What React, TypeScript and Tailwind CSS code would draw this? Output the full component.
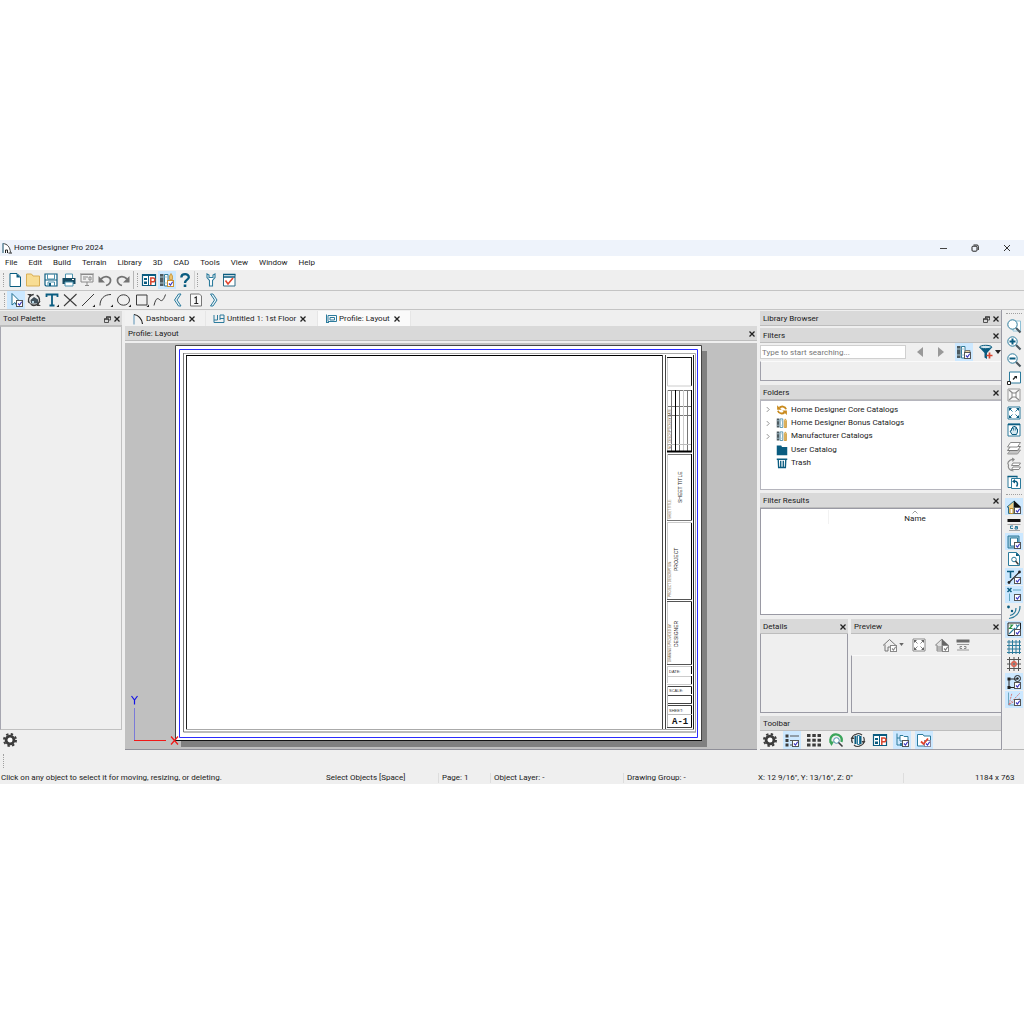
import type { ReactNode } from "react";

const TEAL = "#0a5c80";
const DARK = "#3c3c3c";
const GREY = "#8a8a8a";

// ——— Icon helpers ———
const Icon = ({ children }: { children: ReactNode }) => (
  <svg viewBox="0 0 16 16" className="h-4 w-4 shrink-0" fill="none" aria-hidden="true">
    {children}
  </svg>
);

// small tick box that marks a toggle which is switched on
const Tick = ({ color = "#3a35c0", stroke = "#555" }: { color?: string; stroke?: string }) => (
  <>
    <rect x="8.5" y="8.5" width="6" height="6" fill="#fff" stroke={stroke} strokeWidth="1" />
    <path d="M10 11.5l1.5 1.6 2.2-3.4" stroke={color} strokeWidth="1.1" />
  </>
);

const Corner = () => <path d="M15 12.5V15h-2.5z" fill="#222" />;

const NewIcon = () => (
  <Icon>
    <path d="M3 1.5h7l3.5 3.5v9.5H3z" fill="#fff" stroke={TEAL} />
    <path d="M9.5 1.5l4 4h-4z" fill={TEAL} />
  </Icon>
);
const OpenIcon = () => (
  <Icon>
    <path d="M1.5 2h5L8 4h6.5v10h-13z" fill="#f8dd94" stroke="#d9ae55" />
  </Icon>
);
const SaveIcon = () => (
  <Icon>
    <path d="M2 2h12v12H3l-1-1z" fill="#fff" stroke={TEAL} strokeWidth="1.2" />
    <path d="M4.5 2v5h7V2M5 14v-4h6.5v4" stroke="#4b92ae" />
    <path d="M2 8h12" stroke={TEAL} />
    <path d="M6 11h2v3H6z" fill={TEAL} />
  </Icon>
);
const PrintIcon = () => (
  <Icon>
    <path d="M4.5 6V2h7v4" fill="#fff" stroke="#4b92ae" />
    <path d="M1.5 6h13v6h-13z" fill="#174b62" />
    <path d="M4 10h8v4H4z" fill="#fff" stroke="#4b92ae" />
    <path d="M11 7.5h2" stroke="#fff" />
  </Icon>
);
const SendIcon = () => (
  <Icon>
    <path d="M2 2.5h12V10H2z" stroke={GREY} />
    <path d="M1 2h14M4 5h5M4 7h3M10 5h2v3h-2zM6 13.5h4M8 10v4" stroke={GREY} />
  </Icon>
);
const UndoIcon = () => (
  <Icon>
    <path d="M4 7c4-4 10-2.500 9.500 2-.3 2.500-2.500 4-4.500 4.500" stroke="#737373" strokeWidth="1.800" />
    <path d="M1.500 4v6.500H8z" fill="#737373" />
  </Icon>
);
const RedoIcon = () => (
  <Icon>
    <path d="M12 7C8 3 2 4.500 2.500 9c.3 2.500 2.500 4 4.500 4.500" stroke="#737373" strokeWidth="1.800" />
    <path d="M14.500 4v6.500H8z" fill="#737373" />
  </Icon>
);
const PlanIcon = () => (
  <Icon>
    <path d="M1.5 2.5h13v11h-13z" fill="#fff" stroke={TEAL} strokeWidth="1.2" />
    <path d="M1 3h14" stroke={TEAL} strokeWidth="2" />
    <path d="M3 6h3v2H3zM3 9.5h3V12H3z" fill={TEAL} />
    <path d="M7.5 4v9.5" stroke={TEAL} />
    <path d="M9.8 13V6H12a1.7 1.7 0 010 3.8h-2" stroke="#d8452e" strokeWidth="1.5" />
  </Icon>
);
const Books = () => (
  <>
    <path d="M1 2h3.5v12H1z" fill="#4d5a60" />
    <path d="M5.5 2.500H9v11.500H5.500z" fill="#fff" stroke="#317c9b" />
    <path d="M1 5h3.500M1 11h3.500M5.500 5H9M5.500 11H9" stroke="#a9c6d2" />
  </>
);
const LibraryIcon = () => (
  <Icon>
    <Books />
    <path d="M10.5 7.500V4L12 1.500 13.500 4v3.500z" fill="#ecc26b" stroke="#c48a22" strokeWidth=".7" />
    <Tick stroke="#c89232" />
  </Icon>
);
const CatalogIcon = () => (
  <Icon>
    <Books />
    <path d="M11 5l1.500-2.500L14 5v9h-3z" fill="#f3cf84" stroke="#c48a22" strokeWidth=".9" />
    <path d="M12.500 5v9" stroke="#c48a22" strokeWidth=".7" />
  </Icon>
);
const HelpIcon = () => (
  <Icon>
    <path d="M4.300 5.500C4.500 1 12 1.300 11.800 5.300 11.600 7.800 8 7.500 8 11" stroke={TEAL} strokeWidth="2.300" />
    <path d="M6.700 12.500h2.600V15H6.700z" fill={TEAL} />
  </Icon>
);
const WrenchIcon = () => (
  <Icon>
    <path
      d="M4 2v3.500l2.500 3V14h3V8.500l2.500-3V2l-2 1v2.500H6V3z"
      fill="#fff"
      stroke="#2c7b9c"
      strokeWidth="1.100"
    />
  </Icon>
);
const ChecklistIcon = () => (
  <Icon>
    <path d="M2.500 2.500H14V14H2.500z" fill="#fff" stroke="#2f6c87" />
    <path d="M2 2.500h12.500M2 5h12" stroke={TEAL} strokeWidth="1.300" />
    <path d="M4.500 8.500L7 12l5-6" stroke="#e0452f" strokeWidth="1.600" />
  </Icon>
);
const SelectIcon = () => (
  <Icon>
    <path d="M4 1.500V13l3-2.500 2 4 1.500-.8-2-3.700h4z" fill="#fff" stroke="#1f6f91" />
    <Tick />
  </Icon>
);
const OrbitIcon = () => (
  <Icon>
    <circle cx="8" cy="8" r="5.500" stroke={DARK} strokeWidth="1.300" strokeDasharray="11 3" />
    <path d="M4.500 8L8 5l4 2.500v4H5z" fill="#41505a" />
    <path d="M6 9h2v2H6z" fill="#b8d6e4" />
    <path d="M1 2h4v3zM15 14h-4v-3z" fill={DARK} />
    <path d="M2 9c3 6 11 5 12 0" stroke={DARK} />
  </Icon>
);
const TextIcon = () => (
  <Icon>
    <path d="M2.500 5V2.500h11V5M8 2.500v11M5.500 13.500h5" stroke={TEAL} strokeWidth="1.800" />
    <Corner />
  </Icon>
);
const CrossIcon = () => (
  <Icon>
    <path d="M2 2.500L14.500 14M14.500 2L2 14" stroke={DARK} strokeWidth="1.100" />
  </Icon>
);
const LineIcon = () => (
  <Icon>
    <path d="M2 14L14 2" stroke={DARK} />
    <Corner />
  </Icon>
);
const ArcIcon = () => (
  <Icon>
    <path d="M2 13.500C2 7 6 2.500 13 2.500" stroke={DARK} />
    <Corner />
  </Icon>
);
const EllipseIcon = () => (
  <Icon>
    <ellipse cx="7.500" cy="8" rx="6" ry="5.200" stroke={DARK} />
    <Corner />
  </Icon>
);
const RectIcon = () => (
  <Icon>
    <path d="M2.500 3H13v10H2.500z" stroke={DARK} />
    <Corner />
  </Icon>
);
const SplineIcon = () => (
  <Icon>
    <path d="M2 13.500C4 5 6 6 8 8s4-1 5.500-5.500" stroke={DARK} />
  </Icon>
);
const BackIcon = () => (
  <Icon>
    <path d="M11 2H8.500l-4 6 4 6H11L7 8z" fill="#e4f1f7" stroke="#2c7b9c" />
  </Icon>
);
const NextIcon = () => (
  <Icon>
    <path d="M4.500 2H7l4 6-4 6H4.500l4-6z" fill="#e4f1f7" stroke="#2c7b9c" />
  </Icon>
);
const PageIcon = () => (
  <Icon>
    <path d="M2.500 2h9l2 2v10h-11z" fill="#f8f8f8" stroke="#777" />
    <path d="M6.500 6l1.800-1v6.500M6.300 11.500h4" stroke="#222" strokeWidth="1.100" />
  </Icon>
);
const GearIcon = () => (
  <Icon>
    <circle cx="8" cy="8" r="3.900" stroke={DARK} strokeWidth="2.800" fill="#fff" />
    <circle cx="8" cy="8" r="6" stroke={DARK} strokeWidth="2" strokeDasharray="2.360 2.360" />
  </Icon>
);

// ——— Zoom and view icons ———
const Lens = ({ children }: { children?: ReactNode }) => (
  <>
    <path d="M10 10l4.500 4.500" stroke="#4b5961" strokeWidth="2.200" />
    <circle cx="6.500" cy="6.500" r="4.700" fill="#fff" stroke="#2c7b9c" />
    {children}
  </>
);
const ZoomIcon = () => (
  <Icon>
    <path d="M7 3h7.500v10H7z" fill="#fff" stroke="#8fc1d6" />
    <Lens />
  </Icon>
);
const ZoomInIcon = () => (
  <Icon>
    <Lens>
      <path d="M3.500 6.500h6M6.500 3.500v6" stroke={TEAL} strokeWidth="2" />
    </Lens>
  </Icon>
);
const ZoomOutIcon = () => (
  <Icon>
    <Lens>
      <path d="M3.500 6.500h6" stroke={TEAL} strokeWidth="2" />
    </Lens>
  </Icon>
);
const ResizeIcon = () => (
  <Icon>
    <path d="M3.500 2h11v11h-11z" fill="#fff" stroke="#2c7b9c" />
    <path d="M1.500 11.500h3v3h-3z" fill="#fff" stroke="#222" />
    <path d="M7 9.500L9.500 7" stroke="#222" strokeWidth="1.300" />
    <path d="M8 6h3v3z" fill="#222" />
  </Icon>
);
const Fit = ({ c, fill }: { c: string; fill: string }) => (
  <Icon>
    <path d="M2 2h12v12H2z" fill="#fff" stroke={c} />
    <path d="M3 3l3.500 3.500M13 3L9.500 6.500M3 13l3.500-3.500M13 13L9.500 9.500" stroke={c} />
    <path d="M3 3h3L3 6zM13 3v3l-3-3zM3 13v-3l3 3zM13 13h-3l3-3z" fill={fill} />
  </Icon>
);
const FitGreyIcon = () => (
  <Icon>
    <path d="M2 2h12v12H2z" fill="#f8f8f8" stroke="#999" />
    <path d="M3 3l3.500 3M13 3L9.500 6M3 13l3.500-3M13 13l-3.500-3" stroke={GREY} strokeWidth="1.200" />
    <path d="M6 6h4v4H6z" fill="#fff" stroke={GREY} />
  </Icon>
);
const HandIcon = () => (
  <Icon>
    <path d="M2 2h12v12H2z" fill="#fff" stroke="#2c7b9c" />
    <path d="M2 2.500h12" stroke={TEAL} strokeWidth="1.600" />
    <path d="M6 12.500L4 9l1.500-.5v-2h1V5h1.300v-.5h1.400v.8h1.300V7h1v3l-1 2.500z" fill="#d5e8f0" stroke={TEAL} />
    <path d="M7.500 6v2.500M9.300 6v2.500" stroke={TEAL} strokeWidth=".7" />
  </Icon>
);
const LayersIcon = () => (
  <Icon>
    <path d="M1.500 14l3-4h10l-3 4z" fill="#c4c4c4" stroke="#9a9a9a" />
    <path d="M1.500 10.500l3-4h10l-3 4z" fill="#fff" stroke="#777" />
    <path d="M1.500 7l3-4.500h10l-3 4.500z" fill="#fff" stroke={GREY} />
  </Icon>
);
const SwapLinesIcon = () => (
  <Icon>
    <path d="M7 2.200C2 3.500 1 6 2.500 8c-1 3 1 5.500 5 6" stroke={GREY} strokeWidth="1.200" />
    <path d="M6 .5l3 1.700L6.500 5z" fill={GREY} />
    <path d="M7 6h7.500L13 8.500H5.500zM7 10h7.500L13 12.500H5.500z" fill="#fff" stroke={GREY} />
  </Icon>
);
const RevertIcon = () => (
  <Icon>
    <path d="M2 2.500h9v11H2z" fill="#fff" stroke="#2c7b9c" />
    <path d="M5.500 4.500h9v10h-9z" fill="#fff" stroke="#2c7b9c" />
    <path d="M1.500 2.500h10" stroke={TEAL} strokeWidth="1.500" />
    <path d="M8 7.500c4-1 4 3 2.500 5" stroke={TEAL} strokeWidth="1.500" />
    <path d="M6 7.500L9 5v4.500z" fill={TEAL} />
  </Icon>
);
const HouseLayersIcon = () => (
  <Icon>
    <path d="M1 8l7-6v12.500H2.500V8z" fill="#f1cf87" stroke="#2c6d8b" />
    <path d="M8 1.500L15 8H8z" fill="#111" />
    <path d="M8 8h5v5H8z" fill="#e6a93c" />
    <path d="M4 9.500h3v5H4z" fill="#fff" stroke="#c1912f" />
    <Tick />
  </Icon>
);
const LineWeightIcon = () => (
  <Icon>
    <path d="M1.500 3h13v3h-13z" fill="#111" />
    <path d="M1.500 8.500h13M3 14.500h11" stroke="#888" strokeWidth=".7" />
    <path d="M7 10H4.500v2.500H7M9 10.500h2.500V13H9v-1.300h2.500" stroke="#2c7b9c" />
  </Icon>
);
const SheetTickIcon = () => (
  <Icon>
    <path d="M2 2h11v12H2z" fill="#9cc5d8" stroke="#2c7b9c" />
    <path d="M4.500 4h7v8h-7z" fill="#fff" stroke="#2c7b9c" />
    <Tick />
  </Icon>
);
const PreviewPageIcon = () => (
  <Icon>
    <path d="M2.500 1.500h8l3 3v10h-11z" fill="#fff" stroke="#2c7b9c" />
    <path d="M10 1.500V5h3.500z" fill={TEAL} />
    <circle cx="8" cy="8.500" r="2.300" stroke="#2c7b9c" />
    <path d="M9.500 10l3 3.500" stroke={DARK} strokeWidth="1.500" />
  </Icon>
);
const TextLineIcon = () => (
  <Icon>
    <path d="M1 2.500h7M4.500 2.500V9" stroke={TEAL} strokeWidth="1.500" />
    <path d="M3 13.500L13.500 3" stroke="#222" strokeWidth="1.200" />
    <circle cx="3" cy="13.500" r="1.400" fill="#222" />
    <circle cx="13.500" cy="3" r="1.400" fill="#222" />
    <Tick />
  </Icon>
);
const PointSnapIcon = () => (
  <Icon>
    <path d="M1.500 2l4 4M5.500 2l-4 4" stroke={TEAL} strokeWidth="1.500" />
    <path d="M7 4h8M3.500 7.500V15" stroke="#60a4c0" />
    <Tick />
  </Icon>
);
const ArcsIcon = () => (
  <Icon>
    <path d="M14 2c0 7-4.500 11.500-11 12.500M10 4c0 4-2 6.500-6 7.500" stroke="#2c7b9c" strokeWidth="1.200" />
    <circle cx="2.500" cy="3" r="1.400" fill={TEAL} />
    <circle cx="6" cy="7" r="1.200" fill={TEAL} />
  </Icon>
);
const AxesIcon = () => (
  <Icon>
    <path d="M2 2h12.500v12.500H2z" fill="#fff" stroke="#222" />
    <path d="M3.500 4h3l-3 3.500h3" stroke="#2a9143" strokeWidth="1.200" />
    <path d="M10 3.500l1.500 2 2-2M11.500 5.500L10 8M3 13l6-6" stroke="#2c7b9c" strokeWidth="1.200" />
    <Tick />
  </Icon>
);
const GridIcon = () => (
  <Icon>
    <path d="M3 1v14M6.500 1v14M10 1v14M13.500 1v14M1 3h14M1 6.500h14M1 10h14M1 13.500h14" stroke="#2c7b9c" />
  </Icon>
);
const GridSnapIcon = () => (
  <Icon>
    <path d="M3.500 1v14M8 1v14M12.500 1v14M1 3.500h14M1 8h14M1 12.500h14" stroke="#555" />
    <circle cx="8" cy="8" r="2.200" stroke="#e0604c" strokeWidth="1.400" />
  </Icon>
);
const ObjectSnapIcon = () => (
  <Icon>
    <path d="M3 13.500V5h8M3 13.500h6" stroke="#222" />
    <path d="M1.500 3.500h3v3h-3zM1.500 12h3v3h-3z" fill="#222" />
    <circle cx="11.500" cy="4.500" r="3" stroke="#222" />
    <circle cx="11.500" cy="4.500" r="1.200" fill="#222" />
    <Tick />
  </Icon>
);
const AngleSnapIcon = () => (
  <Icon>
    <path d="M2.500 1.500V14H9" stroke="#6da9c2" />
    <path d="M3 13.500L6 2M3 13.500L14 2M3 13.500L14 7" stroke="#d77a7a" strokeDasharray="2 1" />
    <Tick />
  </Icon>
);

// ——— Library browser icons ———
const CoreIcon = () => (
  <Icon>
    <path d="M13.500 7C12 2.500 7 2.500 4.500 5M2.500 9c1.500 4.500 6.500 4.500 9 2" stroke="#c98a1d" strokeWidth="2.400" />
    <path d="M1.500 1.500v6h6zM14.500 14.500v-6h-6z" fill="#c98a1d" />
  </Icon>
);
const FolderIcon = () => (
  <Icon>
    <path d="M1 2h6l1 2h7v11H1z" fill={TEAL} />
  </Icon>
);
const TrashIcon = () => (
  <Icon>
    <path d="M1 3h14" stroke={TEAL} strokeWidth="2" />
    <path d="M3 4l.5 10h9L13 4M6.300 5v9M9.700 5v9" stroke={TEAL} strokeWidth="1.800" />
  </Icon>
);
const LibFilterIcon = () => (
  <Icon>
    <Books />
    <path d="M9 6.500h5v7H9z" fill="#e9d3a0" stroke="#777" />
    <Tick />
  </Icon>
);
const FunnelIcon = () => (
  <Icon>
    <path d="M1 3l5.500 6v4.500L9 15V9l5.500-6z" fill={TEAL} />
    <ellipse cx="7.700" cy="3" rx="6" ry="1.700" fill="#d4e7ef" stroke={TEAL} />
    <path d="M8.500 11.500h6M11.500 8.500v6" stroke="#d8452e" strokeWidth="1.700" />
  </Icon>
);
const HouseGreyIcon = () => (
  <Icon>
    <path d="M1 8.500l6.500-6 6.500 6M3 7.500V14h3v-4h2" stroke="#777" />
    <Tick color="#888" stroke="#888" />
  </Icon>
);
const HouseHalfGreyIcon = () => (
  <Icon>
    <path d="M1.500 8L8 2v12H3V8z" fill="#e2e2e2" stroke={GREY} />
    <path d="M8 2l6.500 6H8z" fill="#666" />
    <path d="M3 10h5M3 12h5" stroke={GREY} />
    <Tick color="#777" stroke="#888" />
  </Icon>
);
const LineWeightGreyIcon = () => (
  <Icon>
    <path d="M1.500 2.500h13v3h-13z" fill="#6a6a6a" />
    <path d="M2 7.500h12M2 13h12" stroke="#999" />
    <path d="M7 9.500H5v2h2M9 9.500h2v2H9" stroke={GREY} />
  </Icon>
);
const ListIcon = () => (
  <Icon>
    <path d="M1.500 2.500h3v3h-3zM1.500 7h3v3h-3zM1.500 11.500h3v3h-3z" fill={DARK} />
    <path d="M6 4h9M6 8.500h3M6 13h2" stroke="#555" />
    <Tick />
  </Icon>
);
const TilesIcon = () => (
  <Icon>
    <path
      d="M1 2h3.500v3H1zM6.300 2h3.500v3H6.300zM11.500 2H15v3h-3.500zM1 6.700h3.500v3H1zM6.300 6.700h3.500v3H6.300zM11.500 6.700H15v3h-3.500zM1 11.400h3.500v3H1zM6.300 11.400h3.500v3H6.300zM11.500 11.400H15v3h-3.500z"
      fill={DARK}
    />
  </Icon>
);
const SearchSyncIcon = () => (
  <Icon>
    <path d="M3 11A5.800 5.800 0 1113.500 10" stroke="#3ba55b" strokeWidth="2.200" />
    <path d="M1 9.500h5L3.500 14z" fill="#3ba55b" />
    <circle cx="8.500" cy="8.500" r="2.800" fill="#fff" stroke="#4b92ae" />
    <path d="M10.500 10.500l4 4" stroke={DARK} strokeWidth="1.600" />
  </Icon>
);
const BooksSyncIcon = () => (
  <Icon>
    <path d="M4.500 4h2v8h-2zM10 4h1.500v8H10z" fill={TEAL} />
    <path d="M7.500 3.500h2v9h-2z" fill="#fff" stroke="#2c7b9c" />
    <path d="M2.500 11A6 6 0 015 2.500M13.500 5A6 6 0 0111 13.500M4 13c2 2 5 2 7 0M5 3c2-2 5-2 7 0" stroke={DARK} strokeWidth="1.200" />
    <path d="M.5 7h4L2.500 4zM11.500 9h4l-2 3z" fill={DARK} />
  </Icon>
);
const TreeIcon = () => (
  <Icon>
    <path d="M3 1.500V13h5M3 6h3" stroke="#2c7b9c" />
    <path d="M6 3.500h3l1 1h4V9H6z" fill="#fff" stroke="#2c7b9c" />
    <path d="M6 11h3v3H6z" fill="#2c7b9c" />
    <Tick />
  </Icon>
);
const FolderCheckIcon = () => (
  <Icon>
    <path d="M1.500 2.500H7L8 4h6.500v10h-13z" fill="#fff" stroke="#2c7b9c" />
    <Tick color="#3a35c0" stroke="#8a8a9a" />
    <path d="M5 9.500L7.500 12l4.500-5.500" stroke="#e0452f" strokeWidth="1.800" />
  </Icon>
);

// ——— Tool bars ———
interface Tool {
  label: string;
  icon: ReactNode;
  active?: boolean;
}

const ToolButton = ({ label, icon, active }: Tool) => (
  <button
    type="button"
    title={label}
    aria-label={label}
    className={`flex h-[18px] w-[18px] shrink-0 items-center justify-center ${
      active ? "bg-[#cce8ff]" : ""
    }`}
  >
    {icon}
  </button>
);

// narrower row height for the vertical bar at the window's right edge
const SideButton = ({ label, icon, active }: Tool) => (
  <button
    type="button"
    title={label}
    aria-label={label}
    className={`flex h-[17px] w-[18px] shrink-0 items-center justify-center ${
      active ? "bg-[#cce8ff]" : ""
    }`}
  >
    {icon}
  </button>
);

const Grip = () => <span className="mx-[2px] h-[14px] border-l border-dotted border-[#a0a0a0]" />;
const GripRow = () => <span className="w-4 border-t border-dotted border-[#a0a0a0]" />;

const fileTools: Tool[] = [
  { label: "New Plan", icon: <NewIcon /> },
  { label: "Open Plan", icon: <OpenIcon /> },
  { label: "Save", icon: <SaveIcon /> },
  { label: "Print", icon: <PrintIcon /> },
  { label: "Send to Layout", icon: <SendIcon /> },
  { label: "Undo", icon: <UndoIcon /> },
  { label: "Redo", icon: <RedoIcon /> },
];
const libraryTools: Tool[] = [
  { label: "Project Browser", icon: <PlanIcon /> },
  { label: "Library Browser", icon: <LibraryIcon />, active: true },
  { label: "Help", icon: <HelpIcon /> },
];
const settingTools: Tool[] = [
  { label: "Preferences", icon: <WrenchIcon /> },
  { label: "Default Settings", icon: <ChecklistIcon /> },
];
const drawTools: Tool[] = [
  { label: "Select Objects", icon: <SelectIcon />, active: true },
  { label: "Camera", icon: <OrbitIcon /> },
  { label: "Text", icon: <TextIcon /> },
  { label: "Point", icon: <CrossIcon /> },
  { label: "Line", icon: <LineIcon /> },
  { label: "Arc", icon: <ArcIcon /> },
  { label: "Ellipse", icon: <EllipseIcon /> },
  { label: "Box", icon: <RectIcon /> },
  { label: "Spline", icon: <SplineIcon /> },
  { label: "Page Down", icon: <BackIcon /> },
  { label: "Change Page", icon: <PageIcon /> },
  { label: "Page Up", icon: <NextIcon /> },
];
const viewTools: Tool[] = [
  { label: "Zoom", icon: <ZoomIcon /> },
  { label: "Zoom In", icon: <ZoomInIcon /> },
  { label: "Zoom Out", icon: <ZoomOutIcon /> },
  { label: "Undo Zoom", icon: <ResizeIcon /> },
  { label: "Fill Window Building Only", icon: <FitGreyIcon /> },
  { label: "Fill Window", icon: <Fit c="#2c7b9c" fill={TEAL} /> },
  { label: "Pan Window", icon: <HandIcon /> },
  { label: "Reference Display", icon: <LayersIcon /> },
  { label: "Swap Floor", icon: <SwapLinesIcon /> },
  { label: "Swap Views", icon: <RevertIcon /> },
];
const snapTools: Tool[] = [
  { label: "Color", icon: <HouseLayersIcon />, active: true },
  { label: "Line Weights", icon: <LineWeightIcon /> },
  { label: "Drawing Sheet", icon: <SheetTickIcon />, active: true },
  { label: "Print Preview", icon: <PreviewPageIcon /> },
  { label: "Temporary Dimensions", icon: <TextLineIcon />, active: true },
  { label: "Point Markers", icon: <PointSnapIcon />, active: true },
  { label: "Arc Centers", icon: <ArcsIcon /> },
  { label: "Axes", icon: <AxesIcon />, active: true },
  { label: "Reference Grid", icon: <GridIcon /> },
  { label: "Grid Snaps", icon: <GridSnapIcon /> },
  { label: "Object Snaps", icon: <ObjectSnapIcon />, active: true },
  { label: "Angle Snaps", icon: <AngleSnapIcon />, active: true },
];
const browserTools: Tool[] = [
  { label: "Preferences", icon: <GearIcon /> },
  { label: "Show List", icon: <ListIcon />, active: true },
  { label: "Show Tiles", icon: <TilesIcon /> },
  { label: "Search Online", icon: <SearchSyncIcon /> },
  { label: "Update Catalogs", icon: <BooksSyncIcon /> },
  { label: "Plants", icon: <PlanIcon /> },
  { label: "Show Tree", icon: <TreeIcon />, active: true },
  { label: "Show Filters", icon: <FolderCheckIcon />, active: true },
];

const menus = ["File", "Edit", "Build", "Terrain", "Library", "3D", "CAD", "Tools", "View", "Window", "Help"];

const folders = [
  { name: "Home Designer Core Catalogs", icon: <CoreIcon />, expandable: true },
  { name: "Home Designer Bonus Catalogs", icon: <CatalogIcon />, expandable: true },
  { name: "Manufacturer Catalogs", icon: <CatalogIcon />, expandable: true },
  { name: "User Catalog", icon: <FolderIcon />, expandable: false },
  { name: "Trash", icon: <TrashIcon />, expandable: false },
];

// ——— Window parts ———
const CloseButton = () => (
  <button type="button" aria-label="Close" className="flex h-3 w-[10px] items-center justify-center">
    <svg viewBox="0 0 6 6" className="h-[6px] w-[6px]" aria-hidden="true">
      <path d="M.5.5l5 5M5.500.5l-5 5" stroke="#222" strokeWidth="1.300" />
    </svg>
  </button>
);

const FloatButton = () => (
  <button type="button" aria-label="Float" className="flex h-3 w-[10px] items-center justify-center">
    <svg viewBox="0 0 7 7" className="h-[7px] w-[7px]" fill="none" aria-hidden="true">
      <path d="M2.500 2.500V1h4v3H5M.5 3h4v3.500h-4z" stroke="#444" strokeWidth=".9" />
      <path d="M2 1h5M0 3h5" stroke="#222" />
    </svg>
  </button>
);

interface PanelHeaderProps {
  title: string;
  float?: boolean;
  closable?: boolean;
}

const PanelHeader = ({ title, float = false, closable = true }: PanelHeaderProps) => (
  <div className="flex h-[15px] shrink-0 items-center border-b border-[#bdbdbd] bg-[#d9d9d9] pl-[3px] pt-[2px]">
    <h2 className="flex-1 truncate">{title}</h2>
    {float && <FloatButton />}
    {closable && <CloseButton />}
  </div>
);

const LogoIcon = () => (
  <svg viewBox="0 0 12 12" className="h-3 w-3" fill="none" aria-hidden="true">
    <path d="M2 11V1.500c4.500.5 7 3.500 7.500 9" fill="#fff" stroke="#444" />
    <path d="M2 1v10" stroke="#6aa6c5" />
    <path d="M4.500 11V8h2v3M7.500 11h3.500" stroke="#222" />
  </svg>
);

const DashboardTabIcon = () => (
  <svg viewBox="0 0 12 12" className="h-3 w-3" fill="none" aria-hidden="true">
    <path d="M2 1.500v10" stroke="#5a92b5" />
    <path d="M2 1.500c4 .5 8 4 8.500 9.500" stroke="#222" strokeWidth="1.200" />
  </svg>
);
const PlanTabIcon = () => (
  <svg viewBox="0 0 12 12" className="h-3 w-3" fill="none" aria-hidden="true">
    <path d="M1 2v7.500h10V2H7v5M4.500 2v5H1M7 5.500h4" stroke="#2c7b9c" />
  </svg>
);
const LayoutTabIcon = () => (
  <svg viewBox="0 0 12 12" className="h-3 w-3" fill="none" aria-hidden="true">
    <path d="M1.500 1.500V10M3 2.500h8.500v6H3z" stroke="#2c7b9c" />
    <path d="M5 4.500h4.500V7H5zM1 9.500h3" stroke="#2c7b9c" />
  </svg>
);

const tabs = [
  { name: "Dashboard", icon: <DashboardTabIcon />, width: "w-[81px]" },
  { name: "Untitled 1: 1st Floor", icon: <PlanTabIcon />, width: "w-[112px]" },
  { name: "Profile: Layout", icon: <LayoutTabIcon />, width: "w-[93px]", current: true },
];

// The layout sheet with its border lines and title block
const Sheet = () => (
  <svg
    viewBox="0 0 532 402"
    className="h-[402px] w-[532px] shrink-0"
    fill="none"
    fontFamily="'Liberation Sans', sans-serif"
    role="img"
    aria-label="Layout sheet"
  >
    <path d="M6 6h526v396H6z" fill="#808080" />
    <path d="M.5.5h526v395H.5z" fill="#fff" stroke="#444" />
    <path d="M0 395.500h527" stroke="#111" />
    <path d="M4.500 4.500h518v388h-518z" stroke="#2b2bff" />
    <path d="M8.500 8.500h512v379" stroke="#aaa" />
    <path d="M8.500 8v379h512" stroke="#777" />
    <path d="M518.500 10v374.500M11.500 384V10" stroke="#222" />
    <path d="M11 384.500h507" stroke="#aaa" />
    <path d="M11 10.500h477" stroke="#000" />
    <path d="M487.500 10v374M490.500 10v374" stroke="#444" />

    <path d="M492 12.500h25M516.500 12v29" stroke="#111" />
    <path d="M492.500 13v28h24" stroke="#ccc" />

    <path d="M492 45.500h25M492 61.500h25M492 70.500h25" stroke="#777" />
    <path d="M492.500 45v62M508.500 45v62" stroke="#ccc" />
    <path d="M496.500 45v62M504.500 45v62M512.500 45v62" stroke="#777" />
    <path d="M492 99.500h25" stroke="#bbb" />
    <path d="M500.500 45v62M516.500 45v62" stroke="#000" />
    <path d="M492 106.500h25" stroke="#000" strokeWidth="2" />

    <path d="M492 109.500h25M492 175.500h25" stroke="#777" />
    <path d="M516.500 109v66M516.500 178v76M516.500 256v63" stroke="#000" />
    <path d="M492.500 109v66M492.500 178v76M492.500 256v63M492 177.500h25" stroke="#ccc" />
    <path d="M492 254.500h25M492 256.500h25M492 319.500h25" stroke="#555" />

    <path d="M492 321.500h25M492.500 321v17M492 331.500h25M492 339.500h25" stroke="#ccc" />
    <path d="M516.500 321v8M516.500 331v8M516.500 341v8M516.500 351v7M516.500 361v22" stroke="#000" />
    <path d="M492 341.500h25M492 350.500h25M492 358.500h25M492 360.500h25M492 382.500h25" stroke="#444" />
    <path d="M492.500 341v41M492 369.500h25" stroke="#bbb" />

    <g fill="#222" fontSize="5">
      <text transform="translate(507 158) rotate(-90)">SHEET TITLE</text>
      <text transform="translate(503 226) rotate(-90)">PROJECT</text>
      <text transform="translate(503 302) rotate(-90)">DESIGNER</text>
    </g>
    <g fill="#75613b" fontSize="3">
      <text transform="translate(496 104) rotate(-90)">NO. DESCRIPTION  BY  DATE</text>
      <text transform="translate(496 174) rotate(-90)">SHEET TITLE:</text>
      <text transform="translate(496 252) rotate(-90)">PROJECT DESCRIPTION:</text>
      <text transform="translate(496 317) rotate(-90)">DRAWINGS PROVIDED BY:</text>
    </g>
    <g fill="#333" fontSize="4">
      <text x="494" y="328">DATE:</text>
      <text x="494" y="347">SCALE:</text>
      <text x="494" y="367">SHEET:</text>
    </g>
    <text x="497" y="379" fill="#111" fontSize="9" fontWeight="700" fontFamily="'Liberation Mono', monospace">
      A-1
    </text>
  </svg>
);

const App = () => {
  return (
    <div className="flex min-h-screen flex-col justify-center bg-white font-[Roboto,'Noto_Sans',sans-serif] text-[8px] leading-[10px] text-[#1a1a1a]">
      <div className="flex flex-col bg-[#efefef]">
        <header className="flex h-4 items-center bg-[#eef3fb] pl-[1px]">
          <LogoIcon />
          <h1 className="ml-[1px] flex-1">Home Designer Pro 2024</h1>
          <div className="flex">
            <button type="button" aria-label="Minimize" className="flex h-4 w-[31px] items-center justify-center">
              <svg viewBox="0 0 8 8" className="h-2 w-2">
                <path d="M0 4.500h7" stroke="#444" />
              </svg>
            </button>
            <button type="button" aria-label="Restore" className="flex h-4 w-[31px] items-center justify-center">
              <svg viewBox="0 0 8 8" className="h-2 w-2" fill="none">
                <rect x="1" y="2.200" width="5" height="5" rx="1" stroke="#222" />
                <path d="M2.500 1H6a1.300 1.300 0 011.300 1.300V6" stroke="#222" />
              </svg>
            </button>
            <button type="button" aria-label="Close window" className="flex h-4 w-[34px] items-center justify-center">
              <svg viewBox="0 0 8 8" className="h-2 w-2">
                <path d="M1 1l6 6M7 1L1 7" stroke="#333" />
              </svg>
            </button>
          </div>
        </header>

        <nav className="flex h-[14px] items-center gap-[11px] bg-white pl-[5px]">
          {menus.map((menu) => (
            <button key={menu} type="button">
              {menu}
            </button>
          ))}
        </nav>

        <div className="flex h-[21px] items-center border-b border-[#c4c4c4] pl-[1px]">
          <Grip />
          {fileTools.map((tool) => (
            <ToolButton key={tool.label} {...tool} />
          ))}
          <span className="ml-[1px] mr-[1px] h-[18px] border-l border-[#b5b5b5]" />
          <Grip />
          {libraryTools.map((tool) => (
            <ToolButton key={tool.label} {...tool} />
          ))}
          <span className="h-[18px] border-l border-[#d0d0d0]" />
          <Grip />
          <span className="w-[2px]" />
          {settingTools.map((tool) => (
            <ToolButton key={tool.label} {...tool} />
          ))}
        </div>
        <div className="flex h-[19px] items-center border-b border-[#c4c4c4] pl-[2px]">
          <Grip />
          {drawTools.map((tool) => (
            <ToolButton key={tool.label} {...tool} />
          ))}
        </div>

        <main className="flex h-[440px]">
          <aside className="flex w-[122px] shrink-0 flex-col pt-[1px]">
            <PanelHeader title="Tool Palette" float />
            <div className="flex-1 border border-[#c0c0c0] border-l-[#a6a6b0]" />
            <div className="flex h-[20px] items-center pl-[1px]">
              <ToolButton label="Palette Preferences" icon={<GearIcon />} />
            </div>
          </aside>

          <section className="ml-[3px] flex min-w-0 flex-1 flex-col pt-[1px]">
            <div className="flex h-[15px]">
              {tabs.map((tab) => (
                <div
                  key={tab.name}
                  className={`flex items-center border-r border-[#e6e6e6] pl-[7px] ${tab.width} ${
                    tab.current ? "bg-[#fafafa]" : "bg-[#f1f1f1]"
                  }`}
                >
                  {tab.icon}
                  <button type="button" className="ml-[2px] mr-[2px] whitespace-nowrap">
                    {tab.name}
                  </button>
                  <CloseButton />
                </div>
              ))}
            </div>
            <PanelHeader title="Profile: Layout" />
            <div className="relative mt-[2px] flex flex-1 items-center justify-center overflow-hidden border-b border-[#8f8f98] bg-[#c0c0c0]">
              <Sheet />
              <svg
                viewBox="0 0 50 54"
                className="absolute bottom-[2px] left-[5px] h-[54px] w-[50px]"
                fill="none"
                aria-label="Axes"
              >
                <path d="M4.500 15v32" stroke="#7a7ad8" />
                <path d="M4 47.500h32" stroke="#f01818" />
                <path d="M1.500 3l3 4 3-4M4.500 7v4.500" stroke="#1414e6" strokeWidth="1.200" />
                <path d="M41 43.500l7 8M48 43.500l-7 8" stroke="#f01818" strokeWidth="1.200" />
              </svg>
            </div>
          </section>

          <aside className="ml-[3px] flex w-[242px] shrink-0 flex-col border-r border-[#9a9aa4] pt-[1px]">
            <PanelHeader title="Library Browser" float />
            <div className="h-[2px]" />
            <PanelHeader title="Filters" />
            <div className="flex h-[18px] items-center">
              <input
                type="text"
                aria-label="Search library"
                placeholder="Type to start searching..."
                className="h-[14px] w-[146px] border border-[#d0d0d0] bg-white px-[1px] placeholder:text-[#777]"
              />
              <button type="button" aria-label="Previous" className="ml-[7px] flex h-4 w-[14px] items-center justify-center">
                <svg viewBox="0 0 8 12" className="h-3 w-2">
                  <path d="M7 1v10L1 6z" fill="#999" />
                </svg>
              </button>
              <button type="button" aria-label="Next" className="ml-[7px] mr-[7px] flex h-4 w-[14px] items-center justify-center">
                <svg viewBox="0 0 8 12" className="h-3 w-2">
                  <path d="M1 1v10l6-5z" fill="#999" />
                </svg>
              </button>
              <ToolButton label="Filter by Library" icon={<LibFilterIcon />} active />
              <span className="w-[4px]" />
              <ToolButton label="Add Filter" icon={<FunnelIcon />} />
              <svg viewBox="0 0 6 4" className="h-1 w-[6px]">
                <path d="M0 0h6L3 4z" fill="#222" />
              </svg>
            </div>
            <div className="h-[20px] border-b border-l border-t border-[#a0a0aa] border-t-[#fafafa]" />
            <div className="h-[4px]" />
            <PanelHeader title="Folders" />
            <div className="h-[90px] border border-r-0 border-[#b5b5bd] bg-white pt-[2px]">
              <ul className="grid h-[67px] grid-rows-5">
                {folders.map((folder) => (
                  <li key={folder.name} className="flex items-center pl-[5px]">
                    <svg
                      viewBox="0 0 5 8"
                      className={`h-[7px] w-[4px] ${folder.expandable ? "" : "invisible"}`}
                      fill="none"
                    >
                      <path d="M1 1l3 3-3 3" stroke="#777" />
                    </svg>
                    <span className="ml-[6px] mr-[3px] flex h-3 w-3 items-center [&>svg]:h-3 [&>svg]:w-3">
                      {folder.icon}
                    </span>
                    {folder.name}
                  </li>
                ))}
              </ul>
            </div>
            <div className="h-[3px]" />
            <PanelHeader title="Filter Results" />
            <div className="h-[108px] border border-r-0 border-[#9a9aa4] bg-white pt-[1px]">
              <div className="ml-[67px] flex flex-col items-center border-l border-[#f2f2f2]">
                <svg viewBox="0 0 6 4" className="h-[4px] w-[6px]" fill="none">
                  <path d="M.5 3.500L3 1l2.500 2.500" stroke="#888" strokeWidth=".8" />
                </svg>
                <span>Name</span>
              </div>
            </div>
            <div className="h-[4px]" />
            <div className="flex h-[94px] gap-[3px]">
              <div className="flex w-[88px] flex-col">
                <PanelHeader title="Details" />
                <div className="flex-1 border border-t-0 border-[#9a9aa4]" />
              </div>
              <div className="flex flex-1 flex-col">
                <PanelHeader title="Preview" />
                <div className="flex h-[21px] items-center justify-center">
                  <ToolButton label="Floor Camera" icon={<HouseGreyIcon />} />
                  <svg viewBox="0 0 6 4" className="mr-[6px] h-[3px] w-[5px]">
                    <path d="M0 0h6L3 4z" fill="#666" />
                  </svg>
                  <ToolButton label="Fill Preview" icon={<Fit c="#888" fill="#666" />} />
                  <span className="w-[5px]" />
                  <ToolButton label="Preview Color" icon={<HouseHalfGreyIcon />} />
                  <span className="w-[3px]" />
                  <ToolButton label="Preview Line Weights" icon={<LineWeightGreyIcon />} />
                </div>
                <div className="flex-1 border-b border-l border-t border-[#9a9aa4] border-t-[#fafafa]" />
              </div>
            </div>
            <div className="h-[3px]" />
            <PanelHeader title="Toolbar" closable={false} />
            <div className="flex flex-1 items-center gap-[4px] border-b border-[#a0a0a8] pl-[1px]">
              {browserTools.map((tool) => (
                <ToolButton key={tool.label} {...tool} />
              ))}
            </div>
          </aside>

          <div className="ml-[1px] flex w-[21px] shrink-0 flex-col items-center border-b border-[#b5b5b5] pt-[3px]">
            <GripRow />
            <div className="mt-[3px] flex h-[174px] flex-col justify-between">
              {viewTools.map((tool) => (
                <SideButton key={tool.label} {...tool} />
              ))}
            </div>
            <span className="h-[3px]" />
            <GripRow />
            <div className="mt-[3px] flex h-[210px] flex-col justify-between">
              {snapTools.map((tool) => (
                <SideButton key={tool.label} {...tool} />
              ))}
            </div>
          </div>
        </main>

        <div className="flex h-[21px] items-center pl-[1px]">
          <Grip />
        </div>
        <footer className="flex h-[13px] items-center whitespace-nowrap pl-[1px]">
          <span className="flex-1">Click on any object to select it for moving, resizing, or deleting.</span>
          <span className="w-[113px] border-r border-[#ddd]">Select Objects [Space]</span>
          <span className="w-[52px] border-r border-[#ddd] pl-[3px]">Page: 1</span>
          <span className="w-[133px] border-r border-[#ddd] pl-[3px]">Object Layer: -</span>
          <span className="w-[134px] pl-[3px]">Drawing Group: -</span>
          <span className="w-[146px] border-r border-[#ddd]">X: 12 9/16", Y: 13/16", Z: 0"</span>
          <span className="w-[68px] border-r border-[#ddd]" />
          <span className="w-[52px] pl-[3px]">1184 x 763</span>
        </footer>
      </div>
    </div>
  );
};

export default App;
